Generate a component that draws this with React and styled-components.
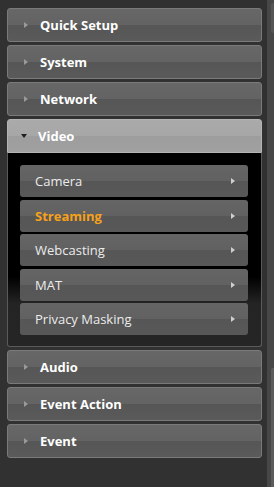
import React from "react";
import styled, { createGlobalStyle } from "styled-components";

const GlobalStyle = createGlobalStyle`
  html, body {
    margin: 0;
    padding: 0;
    background: #313131;
    font-family: "Open Sans", "Liberation Sans", sans-serif;
  }
`;

const Frame = styled.div`
  display: flex;
  width: 274px;
  height: 487px;
  overflow: hidden;
  background: #313131;
`;

const Menu = styled.div`
  flex: 1;
  display: flex;
  flex-direction: column;
  gap: 3px;
  padding: 8px 5px 0 7px;
`;

const Header = styled.div`
  height: 32px;
  display: flex;
  align-items: center;
  gap: 12px;
  padding-left: 16px;
  border: 1px solid ${(p) => (p.open ? "#b4b4b4" : "#7a7a7a")};
  border-radius: ${(p) => (p.open ? "3px 3px 0 0" : "3px")};
  background: ${(p) =>
    p.open
      ? "linear-gradient(#aaa 0%, #a7a7a7 50%, #9d9d9d 50%, #a0a0a0 100%)"
      : "linear-gradient(#676767 0%, #636363 50%, #565656 50%, #5a5a5a 100%)"};
  color: #fff;
  font-weight: 700;
  font-size: 13px;
`;

const ArrowRight = styled.span`
  width: 0;
  height: 0;
  border-top: 3.5px solid transparent;
  border-bottom: 3.5px solid transparent;
  border-left: 4px solid ${(p) => p.color || "#9a9a9a"};
`;

const ArrowDown = styled.span`
  width: 0;
  height: 0;
  margin-left: -3px;
  margin-right: -1px;
  border-left: 3.5px solid transparent;
  border-right: 3.5px solid transparent;
  border-top: 4px solid #1e1e1e;
`;

const Content = styled.div`
  height: 181px;
  margin-top: -3px;
  display: flex;
  flex-direction: column;
  gap: 2.5px;
  padding: 12px 13px 0 12px;
  border: 1px solid #5a5a5a;
  border-top: none;
  border-radius: 0 0 3px 3px;
  background: linear-gradient(#000 0%, #000 64%, #242424 78%, #252525 100%);
`;

const Item = styled.div`
  height: 32px;
  flex-shrink: 0;
  display: flex;
  align-items: center;
  justify-content: space-between;
  padding: 0 13px 0 15px;
  border-radius: 3px;
  background: linear-gradient(#656565 0%, #616161 50%, #565656 50%, #585858 100%);
  color: ${(p) => (p.active ? "#f6a11b" : "#ececec")};
  font-weight: ${(p) => (p.active ? 700 : 400)};
  font-size: 13px;
`;

const ScrollBar = styled.div`
  width: 7px;
  display: flex;
  flex-direction: column;
  justify-content: space-between;
  align-items: flex-end;
  background: #474747;
  padding: 3px 0 0;
`;

const ScrollCap = styled.div`
  width: 3px;
  height: 30px;
  border-radius: 2px 0 0 2px;
  background: #555;
`;

const ScrollThumb = styled.div`
  width: 3px;
  height: 119px;
  border-radius: 2px 0 0 0;
  background: #5c5c5c;
`;

const top = ["Quick Setup", "System", "Network"];
const bottom = ["Audio", "Event Action", "Event"];
const video = ["Camera", "Streaming", "Webcasting", "MAT", "Privacy Masking"];

export default function App() {
  return (
    <Frame>
      <GlobalStyle />
      <Menu>
        {top.map((t) => (
          <Header key={t}>
            <ArrowRight />
            {t}
          </Header>
        ))}
        <Header open>
          <ArrowDown />
          Video
        </Header>
        <Content>
          {video.map((v) => (
            <Item key={v} active={v === "Streaming"}>
              {v}
              <ArrowRight color="#cfcfcf" />
            </Item>
          ))}
        </Content>
        {bottom.map((t) => (
          <Header key={t}>
            <ArrowRight />
            {t}
          </Header>
        ))}
      </Menu>
      <ScrollBar>
        <ScrollCap />
        <ScrollThumb />
      </ScrollBar>
    </Frame>
  );
}
